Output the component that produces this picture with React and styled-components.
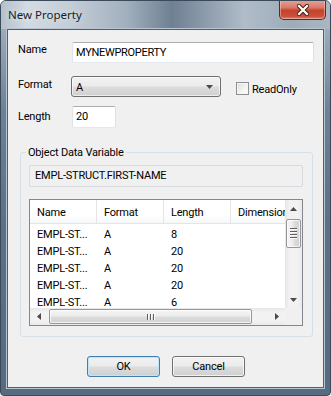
import React from "react";
import styled, { createGlobalStyle } from "styled-components";

const GlobalStyle = createGlobalStyle`
  html, body { margin: 0; padding: 0; background: #ffffff; }
  body {
    font-family: Roboto, "Liberation Sans", Arial, sans-serif;
    font-size: 11px;
    letter-spacing: -0.2px;
    color: #000;
  }
  * { box-sizing: border-box; }
`;

const rows = [
  { name: "EMPL-ST...", format: "A", length: "8" },
  { name: "EMPL-ST...", format: "A", length: "20" },
  { name: "EMPL-ST...", format: "A", length: "20" },
  { name: "EMPL-ST...", format: "A", length: "20" },
  { name: "EMPL-ST...", format: "A", length: "6" },
];

const Arrow = ({ dir }) => {
  const pts = {
    up: "0,4 3.5,0 7,4",
    down: "0,0 3.5,4 7,0",
    left: "4,0 0,3.5 4,7",
    right: "0,0 4,3.5 0,7",
  }[dir];
  const vertical = dir === "up" || dir === "down";
  return (
    <svg width={vertical ? 7 : 4} height={vertical ? 4 : 7} viewBox={vertical ? "0 0 7 4" : "0 0 4 7"}>
      <polygon points={pts} fill="#4a4a4a" />
    </svg>
  );
};

const DialogWindow = () => {
  return (
    <Window>
      <TitleBar>
        <Caption>New Property</Caption>
        <CloseButton>
          <svg width="12" height="12" viewBox="0 0 12 12">
            <path d="M2 2 L10 10 M10 2 L2 10" stroke="#4a2015" strokeWidth="4.2" strokeLinecap="square" />
            <path d="M2 2 L10 10 M10 2 L2 10" stroke="#ffffff" strokeWidth="2.2" strokeLinecap="square" />
          </svg>
        </CloseButton>
      </TitleBar>

      <Client>
        <FieldRow $height={21}>
          <FieldLabel $top={1}>Name</FieldLabel>
          <TextBox $grow defaultValue="MYNEWPROPERTY" readOnly />
        </FieldRow>

        <FieldRow $height={21} $gap={13}>
          <FieldLabel $top={2}>Format</FieldLabel>
          <ComboBox>
            <span>A</span>
            <Arrow dir="down" />
          </ComboBox>
          <CheckWrap>
            <CheckBox />
            <span>ReadOnly</span>
          </CheckWrap>
        </FieldRow>

        <FieldRow $height={22} $gap={9}>
          <FieldLabel $top={4}>Length</FieldLabel>
          <TextBox $width={44} defaultValue="20" readOnly />
        </FieldRow>

        <GroupBox>
          <GroupLegend>Object Data Variable</GroupLegend>
          <ReadOnlyBox>EMPL-STRUCT.FIRST-NAME</ReadOnlyBox>

          <ListView>
            <ListBody>
              <HeaderRow>
                <HeaderCell>Name</HeaderCell>
                <HeaderCell>Format</HeaderCell>
                <HeaderCell>Length</HeaderCell>
                <HeaderCell>Dimension</HeaderCell>
              </HeaderRow>
              {rows.map((r, i) => (
                <DataRow key={i}>
                  <DataCell>{r.name}</DataCell>
                  <DataCell>{r.format}</DataCell>
                  <DataCell>{r.length}</DataCell>
                  <DataCell />
                </DataRow>
              ))}
            </ListBody>

            <VScroll>
              <ScrollArrow><Arrow dir="up" /></ScrollArrow>
              <Thumb $vertical $size={29}>
                <Grip $vertical>
                  <i /><i /><i /><i />
                </Grip>
              </Thumb>
              <TrackFill />
              <ScrollArrow><Arrow dir="down" /></ScrollArrow>
            </VScroll>

            <HScroll>
              <ScrollArrow><Arrow dir="left" /></ScrollArrow>
              <Thumb $size={203}>
                <Grip>
                  <i /><i /><i />
                </Grip>
              </Thumb>
              <TrackFill />
              <ScrollArrow><Arrow dir="right" /></ScrollArrow>
            </HScroll>

            <Corner />
          </ListView>
        </GroupBox>

        <ButtonBar>
          <DialogButton $default>OK</DialogButton>
          <DialogButton>Cancel</DialogButton>
        </ButtonBar>
      </Client>
    </Window>
  );
};

export default function App() {
  return (
    <>
      <GlobalStyle />
      <DialogWindow />
    </>
  );
}

const Window = styled.div`
  width: 331px;
  height: 396px;
  border: 1px solid #3a4a5b;
  border-radius: 6px 6px 4px 4px;
  overflow: hidden;
  display: flex;
  flex-direction: column;
  background: linear-gradient(180deg, #b3bec9 0px, #95a4b3 40px, #6d8196 110px, #5c7086 220px, #566a80 100%);
`;

const TitleBar = styled.div`
  height: 28px;
  display: flex;
  align-items: flex-start;
  justify-content: space-between;
  padding: 0 4px 0 7px;
  background: linear-gradient(
    90deg,
    #b4c0cc 0%,
    #d3dbe2 8%,
    #c2ccd6 22%,
    #a2b0be 38%,
    #6f8093 52%,
    #8c9bab 62%,
    #b0bcc8 74%,
    #9eacba 88%,
    #aab6c2 100%
  );
`;

const Caption = styled.div`
  margin-top: 6px;
  font-family: "Noto Sans", "Open Sans", sans-serif;
  font-size: 11.5px;
  letter-spacing: 0;
  line-height: 15px;
  color: #151c2a;
  text-shadow: 0 0 6px rgba(255, 255, 255, 0.7);
`;

const CloseButton = styled.div`
  width: 47px;
  height: 20px;
  margin-top: -1px;
  display: flex;
  align-items: center;
  justify-content: center;
  border: 1px solid #5c2a20;
  border-top: none;
  border-radius: 0 0 5px 5px;
  background: linear-gradient(180deg, #e6a596 0%, #d9786a 40%, #c4432c 55%, #c8503a 85%, #d8806a 100%);
  box-shadow: inset 0 0 0 1px rgba(255, 220, 210, 0.45);
`;

const Client = styled.div`
  margin: 0 6px;
  height: 359px;
  background: #f0f0f0;
  border: 1px solid #4d5f73;
  box-shadow: 0 0 0 1px #b7c4d1;
  display: flex;
  flex-direction: column;
  padding: 12px 9px 0 10px;
`;

const FieldRow = styled.div`
  display: flex;
  align-items: flex-start;
  height: ${(p) => p.$height}px;
  margin-top: ${(p) => p.$gap || 0}px;
`;

const FieldLabel = styled.div`
  width: 54px;
  flex: none;
  padding-top: ${(p) => p.$top}px;
  line-height: 13px;
`;

const TextBox = styled.input`
  ${(p) => (p.$grow ? "flex: 1;" : `width: ${p.$width}px;`)}
  height: 100%;
  margin: 0;
  padding: 0 0 1px 3px;
  font: inherit;
  letter-spacing: -0.3px;
  color: #000;
  background: #fff;
  border: 1px solid;
  border-color: #abadb3 #dbdfe6 #e3e9ef #e2e3ea;
  border-radius: 2px;
  outline: none;
`;

const ComboBox = styled.div`
  width: 150px;
  height: 21px;
  margin-left: -1px;
  display: flex;
  align-items: center;
  justify-content: space-between;
  padding: 0 7px 0 4px;
  border: 1px solid #707070;
  border-radius: 3px;
  background: linear-gradient(180deg, #f2f2f2 0%, #ebebeb 48%, #dddddd 52%, #cfcfcf 100%);
  box-shadow: inset 0 0 0 1px rgba(255, 255, 255, 0.6);
  span { line-height: 13px; padding-top: 1px; }
`;

const CheckWrap = styled.div`
  display: flex;
  align-items: center;
  gap: 3px;
  margin: 6px 0 0 15px;
  height: 13px;
  span { line-height: 13px; padding-top: 1px; }
`;

const CheckBox = styled.div`
  width: 13px;
  height: 13px;
  border: 1px solid #8e8f8f;
  background: linear-gradient(135deg, #dcdcdc 0%, #f4f4f4 60%, #ffffff 100%);
  box-shadow: inset 0 0 0 1px #f4f4f4;
`;

const GroupBox = styled.fieldset`
  margin: 18px 1px 0 2px;
  padding: 0;
  border: 1px solid #d5dfe5;
  border-radius: 3px;
  min-width: 0;
`;

const GroupLegend = styled.legend`
  margin-left: 5px;
  padding: 0 2px;
  line-height: 13px;
`;

const ReadOnlyBox = styled.div`
  margin: 6px 9px 0 8px;
  height: 22px;
  display: flex;
  align-items: center;
  padding: 0 0 1px 5px;
  background: #f0f0f0;
  border: 1px solid #d7dade;
  border-radius: 2px;
`;

const ListView = styled.div`
  margin: 12px 9px 10px 8px;
  height: 127px;
  border: 1px solid #828790;
  background: #fff;
  display: grid;
  grid-template-columns: 1fr 17px;
  grid-template-rows: 1fr 17px;
`;

const ListBody = styled.div`
  overflow: hidden;
  min-width: 0;
`;

const HeaderRow = styled.div`
  display: grid;
  grid-template-columns: repeat(4, 67px);
  height: 24px;
  border-bottom: 1px solid #e5e5e5;
  margin-bottom: 2px;
  background: linear-gradient(180deg, #ffffff 0%, #ffffff 60%, #f7f8fa 100%);
`;

const HeaderCell = styled.div`
  display: flex;
  align-items: center;
  padding: 2px 0 0 7px;
  border-right: 1px solid #e5e5e5;
  white-space: nowrap;
  overflow: hidden;
`;

const DataRow = styled.div`
  display: grid;
  grid-template-columns: repeat(4, 67px);
  height: 17px;
`;

const DataCell = styled.div`
  padding-left: 7px;
  line-height: 17px;
  white-space: nowrap;
  overflow: hidden;
`;

const VScroll = styled.div`
  display: flex;
  flex-direction: column;
  align-items: center;
  background: linear-gradient(90deg, #e6e6e6 0%, #f2f2f2 25%, #f2f2f2 75%, #e9e9e9 100%);
`;

const HScroll = styled.div`
  display: flex;
  align-items: center;
  background: linear-gradient(180deg, #e6e6e6 0%, #f2f2f2 25%, #f2f2f2 75%, #e9e9e9 100%);
`;

const ScrollArrow = styled.div`
  width: 17px;
  height: 17px;
  flex: none;
  display: flex;
  align-items: center;
  justify-content: center;
`;

const TrackFill = styled.div`
  flex: 1;
`;

const Thumb = styled.div`
  flex: none;
  display: flex;
  align-items: center;
  justify-content: center;
  border: 1px solid #979797;
  border-radius: 2px;
  ${(p) =>
    p.$vertical
      ? `
    width: 15px;
    height: ${p.$size}px;
    margin-top: 2px;
    background: linear-gradient(90deg, #f6f6f6 0%, #ececec 45%, #dcdcdc 55%, #d2d2d2 100%);
  `
      : `
    height: 15px;
    width: ${p.$size}px;
    margin-left: 2px;
    background: linear-gradient(180deg, #f6f6f6 0%, #ececec 45%, #dcdcdc 55%, #d2d2d2 100%);
  `}
  box-shadow: inset 0 0 0 1px rgba(255, 255, 255, 0.7);
`;

const Grip = styled.div`
  display: flex;
  flex-direction: ${(p) => (p.$vertical ? "column" : "row")};
  gap: 1px;
  i {
    display: block;
    background: #5f5f5f;
    border-${(p) => (p.$vertical ? "bottom" : "right")}: 1px solid #fafafa;
    ${(p) => (p.$vertical ? "width: 7px; height: 2px;" : "width: 2px; height: 6px;")}
  }
`;

const Corner = styled.div`
  background: #f0f0f0;
`;

const ButtonBar = styled.div`
  display: flex;
  justify-content: center;
  gap: 12px;
  margin-top: 19px;
`;

const DialogButton = styled.div`
  width: 73px;
  height: 21px;
  display: flex;
  align-items: center;
  justify-content: center;
  padding-bottom: 1px;
  border: 1px solid ${(p) => (p.$default ? "#3c7fb1" : "#707070")};
  border-radius: 3px;
  background: linear-gradient(180deg, #f2f2f2 0%, #ebebeb 48%, #dddddd 52%, #cfcfcf 100%);
  box-shadow: inset 0 0 0 1px ${(p) => (p.$default ? "#bde6fd" : "rgba(255,255,255,0.7)")};
`;
